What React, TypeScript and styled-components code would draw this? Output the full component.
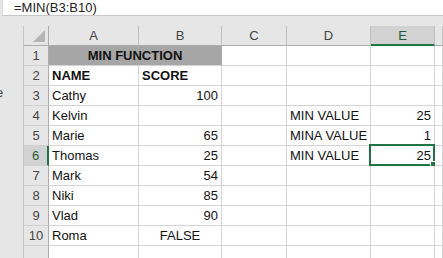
import styled, { createGlobalStyle } from "styled-components";

const GlobalStyle = createGlobalStyle`
  html, body {
    margin: 0;
    padding: 0;
    background: #e6e6e6;
    font-family: "Liberation Sans", Arial, sans-serif;
    overflow: hidden;
  }
`;

const COLS = "26px 90px 83px 65px 84px 64px 1fr";

const Page = styled.div`
  width: 443px;
  height: 258px;
  display: flex;
  flex-direction: column;
  overflow: hidden;
`;

const FormulaBar = styled.div`
  height: 21px;
  margin-left: 2px;
  background: #fff;
  border-left: 1px solid #dadada;
  border-bottom: 1px solid #c6c6c6;
  display: flex;
  align-items: center;
  padding-left: 11px;
  font-size: 13px;
  color: #222;
`;

const Body = styled.div`
  flex: 1;
  display: flex;
`;

const SidePane = styled.div`
  width: 23px;
  padding-top: 69px;
  overflow: hidden;
  font-size: 13px;
  color: #444;
  span {
    display: block;
    margin-left: -4px;
  }
`;

const Sheet = styled.div`
  flex: 1;
  padding-top: 10px;
  display: flex;
  flex-direction: column;
`;

const Row = styled.div`
  display: grid;
  grid-template-columns: ${COLS};
  height: 20px;
`;

const Corner = styled.div`
  background: #e6e6e6;
  border-left: 1px solid #c6c6c6;
  border-right: 1px solid #ababab;
  border-bottom: 1px solid #ababab;
  display: flex;
  align-items: flex-end;
  justify-content: flex-end;
  padding: 0 3px 3px 0;
  svg {
    display: block;
  }
`;

const ColHead = styled.div<{ $active?: boolean }>`
  background: ${(p) => (p.$active ? "#d2d2d2" : "#e6e6e6")};
  border-right: 1px solid #c0c0c0;
  border-bottom: ${(p) => (p.$active ? "2px solid #217346" : "1px solid #ababab")};
  display: flex;
  align-items: center;
  justify-content: center;
  font-size: 13px;
  color: ${(p) => (p.$active ? "#1e5c38" : "#444")};
  box-sizing: border-box;
`;

const RowHead = styled.div<{ $active?: boolean }>`
  background: ${(p) => (p.$active ? "#d2d2d2" : "#e6e6e6")};
  border-left: 1px solid #c6c6c6;
  border-right: ${(p) => (p.$active ? "2px solid #217346" : "1px solid #ababab")};
  border-bottom: 1px solid #d0d0d0;
  display: flex;
  align-items: center;
  justify-content: center;
  font-size: 13px;
  color: ${(p) => (p.$active ? "#1e5c38" : "#444")};
  box-sizing: border-box;
`;

const Cell = styled.div<{
  $align?: "left" | "right" | "center";
  $bold?: boolean;
  $fill?: string;
  $span?: number;
}>`
  position: relative;
  grid-column: span ${(p) => p.$span ?? 1};
  background: ${(p) => p.$fill ?? "#fff"};
  border-right: 1px solid ${(p) => (p.$fill ? "#a6a6a6" : "#d4d4d4")};
  border-bottom: 1px solid #d4d4d4;
  display: flex;
  align-items: flex-end;
  justify-content: ${(p) =>
    p.$align === "right" ? "flex-end" : p.$align === "center" ? "center" : "flex-start"};
  padding: 0 3px 2px 3px;
  font-size: 13px;
  font-weight: ${(p) => (p.$bold ? 700 : 400)};
  color: #111;
  white-space: nowrap;
  box-sizing: border-box;
`;

const Selection = styled.div`
  position: absolute;
  left: -2px;
  top: -2px;
  right: -1px;
  bottom: -1px;
  border: 2px solid #217346;
  pointer-events: none;
  &::after {
    content: "";
    position: absolute;
    right: -4px;
    bottom: -4px;
    width: 5px;
    height: 5px;
    background: #217346;
    border: 1px solid #fff;
  }
`;

type CellData = {
  text?: string;
  align?: "left" | "right" | "center";
  bold?: boolean;
};

const rows: CellData[][] = [
  [{ text: "NAME", bold: true }, { text: "SCORE", bold: true }, {}, {}, {}],
  [{ text: "Cathy" }, { text: "100", align: "right" }, {}, {}, {}],
  [{ text: "Kelvin" }, {}, {}, { text: "MIN VALUE" }, { text: "25", align: "right" }],
  [{ text: "Marie" }, { text: "65", align: "right" }, {}, { text: "MINA VALUE" }, { text: "1", align: "right" }],
  [{ text: "Thomas" }, { text: "25", align: "right" }, {}, { text: "MIN VALUE" }, { text: "25", align: "right" }],
  [{ text: "Mark" }, { text: "54", align: "right" }, {}, {}, {}],
  [{ text: "Niki" }, { text: "85", align: "right" }, {}, {}, {}],
  [{ text: "Vlad" }, { text: "90", align: "right" }, {}, {}, {}],
  [{ text: "Roma" }, { text: "FALSE", align: "center" }, {}, {}, {}],
  [{}, {}, {}, {}, {}],
];

const letters = ["A", "B", "C", "D", "E", ""];

export default function App() {
  return (
    <>
      <GlobalStyle />
      <Page>
        <FormulaBar>=MIN(B3:B10)</FormulaBar>
        <Body>
          <SidePane>
            <span>e</span>
          </SidePane>
          <Sheet>
            <Row>
              <Corner>
                <svg width="12" height="12" viewBox="0 0 12 12">
                  <polygon points="12,0 12,12 0,12" fill="#b4b4b4" />
                </svg>
              </Corner>
              {letters.map((l, i) => (
                <ColHead key={i} $active={l === "E"}>
                  {l}
                </ColHead>
              ))}
            </Row>
            <Row>
              <RowHead>1</RowHead>
              <Cell $span={2} $fill="#a6a6a6" $bold $align="center">
                MIN FUNCTION
              </Cell>
              <Cell />
              <Cell />
              <Cell />
              <Cell />
            </Row>
            {rows.map((r, i) => {
              const n = i + 2;
              return (
                <Row key={n}>
                  <RowHead $active={n === 6}>{n <= 10 ? n : ""}</RowHead>
                  {r.map((c, j) => (
                    <Cell key={j} $align={c.align} $bold={c.bold}>
                      {c.text}
                      {n === 6 && j === 4 && <Selection />}
                    </Cell>
                  ))}
                  <Cell />
                </Row>
              );
            })}
          </Sheet>
        </Body>
      </Page>
    </>
  );
}
